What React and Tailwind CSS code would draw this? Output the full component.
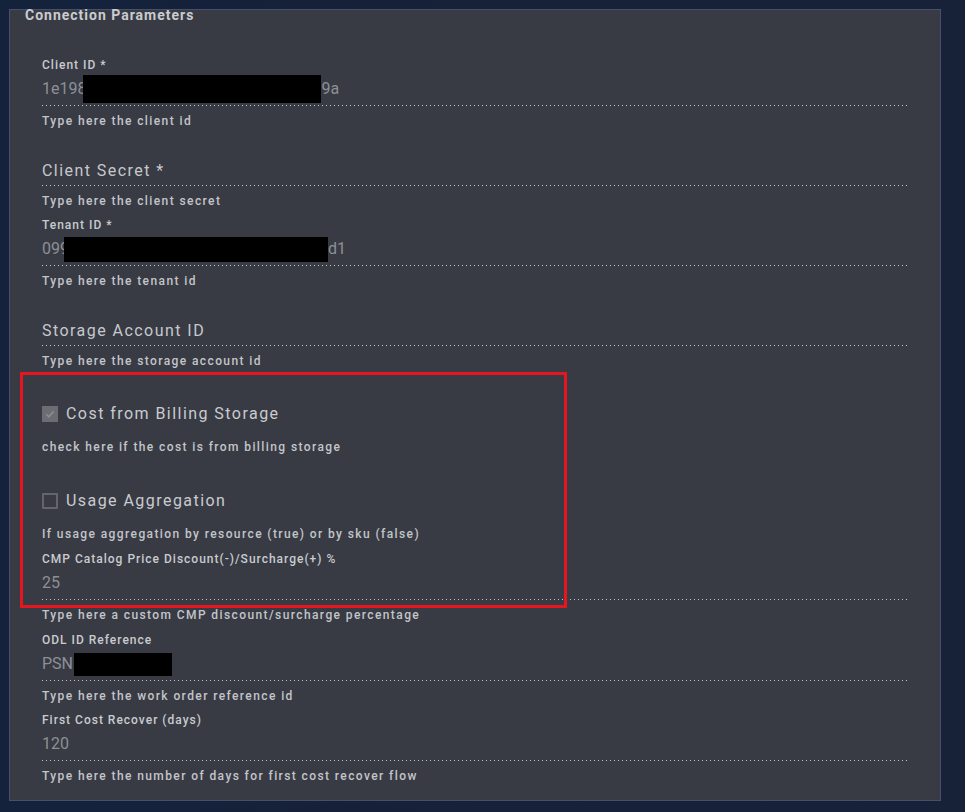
import React from "react";

const font = { fontFamily: "Roboto, 'Liberation Sans', sans-serif" };

function Redacted({ w, h, className = "" }) {
  return <span className={`inline-block bg-black align-middle ${className}`} style={{ width: w, height: h }} />;
}

function Dots() {
  return <div className="h-px w-full bg-[linear-gradient(to_right,#c3c7cd_1px,transparent_1px)] bg-[length:4px_1px]" />;
}

function Field({ label, value, help, empty, gap = "h-2" }) {
  return (
    <div className="flex flex-col">
      <div className="h-4 text-[12px] leading-4 font-medium tracking-[1px] text-[#c9cbcf]">
        {empty ? "" : label}
      </div>
      <div
        className={
          empty
            ? "h-8 pt-[3px] flex items-center text-[16px] tracking-[1.45px] text-[#c6c8cc]"
            : "h-8 flex items-center text-[16px] text-[#8d9095] whitespace-nowrap"
        }
      >
        {empty ? label : value}
      </div>
      <Dots />
      <div className="mt-[7px] h-4 text-[12px] leading-4 font-medium tracking-[1.4px] text-[#c3c5c9] whitespace-nowrap">{help}</div>
      <div className={gap} />
    </div>
  );
}

function CheckRow({ checked, label }) {
  return (
    <div className="h-6 flex items-center gap-2">
      {checked ? (
        <span className="w-4 h-4 bg-[#6b6d72] flex items-center justify-center">
          <svg width="12" height="12" viewBox="0 0 12 12" fill="none">
            <path d="M2.2 6.3 L4.8 8.8 L9.8 3.2" stroke="#8f9196" strokeWidth="1.3" />
          </svg>
        </span>
      ) : (
        <span className="w-4 h-4 border-2 border-[#636569] rounded-[1px]" />
      )}
      <span className="text-[16px] tracking-[1.45px] text-[#c9cbcf]">{label}</span>
    </div>
  );
}

export default function App() {
  return (
    <div className="w-[965px] h-[812px] overflow-hidden bg-gradient-to-r from-[#14223c] via-[#172138] to-[#172239] pt-[9px] pl-[9px]" style={font}>
      <div className="relative w-[932px] h-[792px] bg-[#383b44] border border-[#46506b]">
        {/* title */}
        <div className="px-[15px] h-[10px] leading-[10px] text-[14px] font-bold tracking-[1px] text-[#c9ccd1]">
          Connection Parameters
        </div>

        <div className="mt-[37px] pl-8 pr-[33px]">
          <Field
            label="Client ID *"
            value={
              <>
                1e198
                <Redacted w={238} h={28} className="-ml-[3px]" />
                9a
              </>
            }
            help="Type here the client id"
          />
          <Field empty label="Client Secret *" help="Type here the client secret" />
          <Field
            label="Tenant ID *"
            value={
              <>
                099
                <Redacted w={264} h={25} className="-ml-[5px]" />
                d1
              </>
            }
            help="Type here the tenant id"
          />
          <Field empty label="Storage Account ID" help="Type here the storage account id" />

          <div className="mt-[25px]">
            <CheckRow checked label="Cost from Billing Storage" />
          </div>
          <div className="mt-[13px] h-4 text-[12px] leading-4 font-medium tracking-[1.4px] text-[#c3c5c9]">
            check here if the cost is from billing storage
          </div>
          <div className="mt-[34px]">
            <CheckRow label="Usage Aggregation" />
          </div>
          <div className="mt-[13px] h-4 text-[12px] leading-4 font-medium tracking-[1.4px] text-[#c3c5c9]">
            If usage aggregation by resource (true) or by sku (false)
          </div>
          <div className="mt-[9px]">
            <Field
              label="CMP Catalog Price Discount(-)/Surcharge(+) %"
              value="25"
              help="Type here a custom CMP discount/surcharge percentage"
              gap="h-[9px]"
            />
            <Field
              label="ODL ID Reference"
              value={
                <>
                  PSN
                  <Redacted w={98} h={23} className="ml-px" />
                </>
              }
              help="Type here the work order reference id"
            />
            <Field label="First Cost Recover (days)" value="120" help="Type here the number of days for first cost recover flow" />
          </div>
        </div>

        {/* annotation box */}
        <div className="absolute left-[10px] top-[362px] w-[547px] h-[236px] border-[3px] border-[#e5161f] pointer-events-none" />
      </div>
    </div>
  );
}
